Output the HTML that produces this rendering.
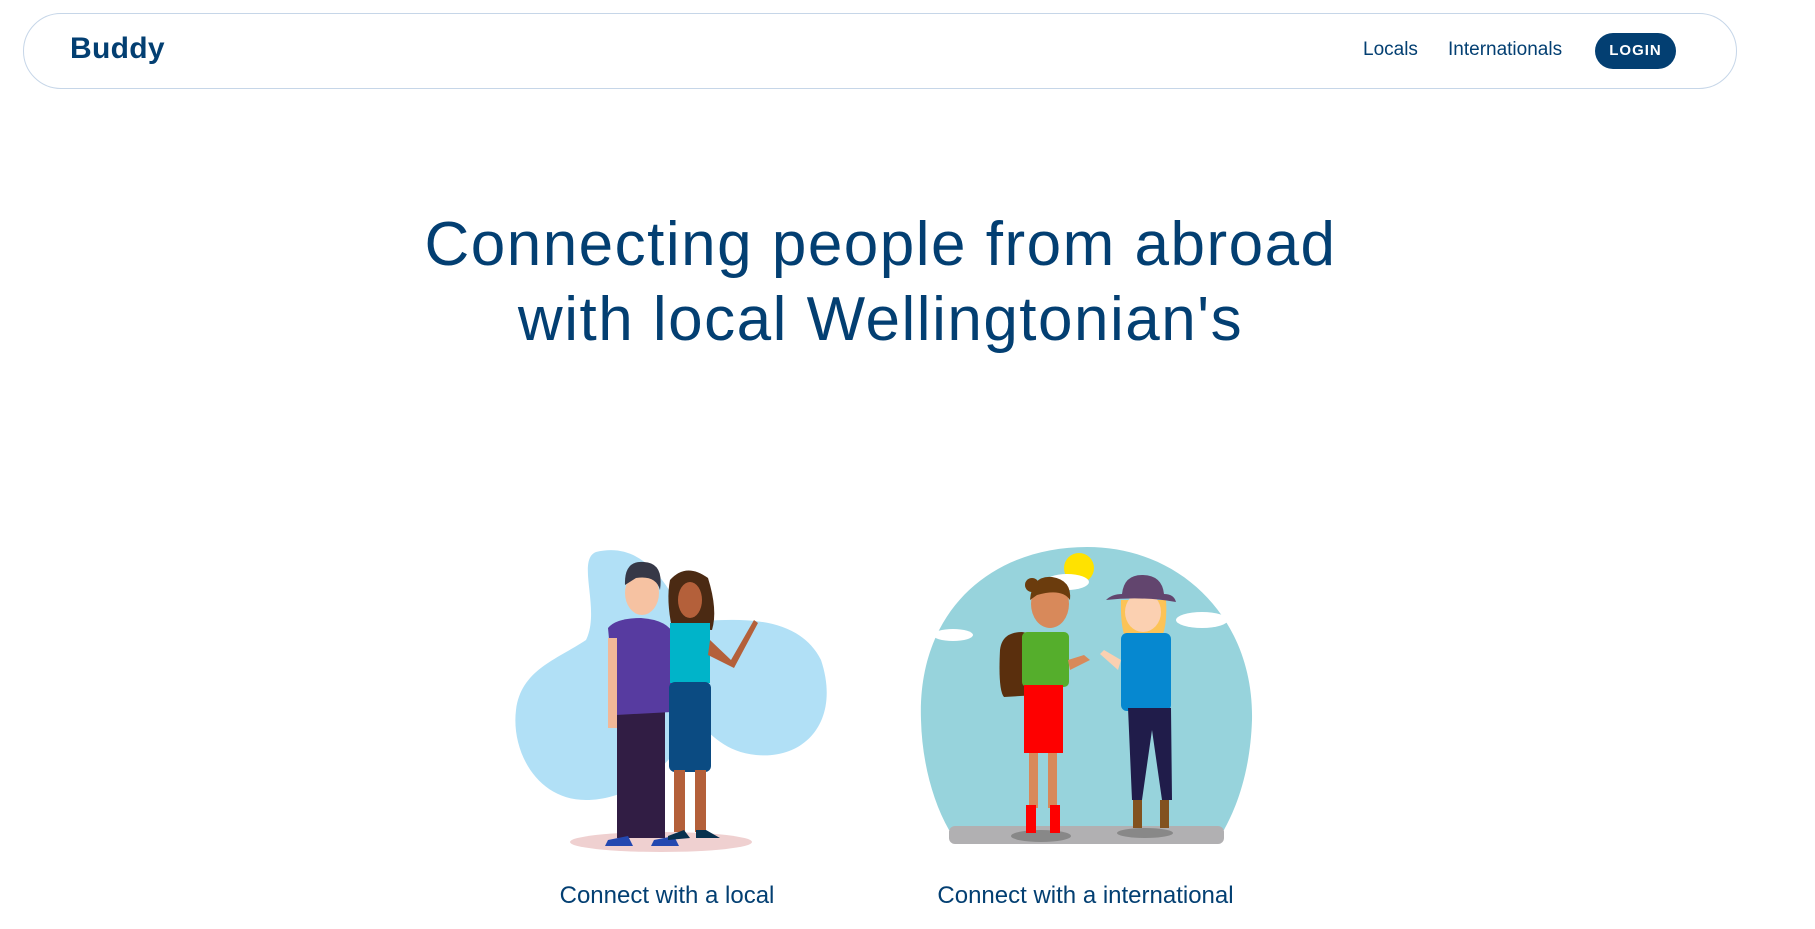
<!DOCTYPE html>
<html><head><meta charset="utf-8"><style>
*{margin:0;padding:0;box-sizing:border-box}
body{width:1815px;height:929px;background:#fff;font-family:"Liberation Sans",sans-serif;color:#033f72;position:relative;overflow:hidden}
.nav{position:absolute;left:23px;top:13px;width:1714px;height:76px;border:1px solid #c6d6e8;border-radius:38px}
.logo{position:absolute;left:70px;top:32px;font-size:30px;font-weight:bold;color:#033f72;letter-spacing:0.3px}
.l{position:absolute;top:39px;font-size:19px}
.btn{position:absolute;left:1595px;top:33px;width:81px;height:36px;border-radius:18px;background:#033f72;color:#fff;font-size:15px;font-weight:bold;letter-spacing:1px;text-align:center;line-height:36px}
h1{position:absolute;left:-27px;width:1815px;top:207px;text-align:center;font-weight:normal;font-size:62px;letter-spacing:1.5px;line-height:75px;color:#033f72}
.cap{position:absolute;top:882px;font-size:24px;text-align:center}
svg{position:absolute;left:0;top:0}
</style></head><body>
<div class="nav"></div>
<div class="logo">Buddy</div>
<div class="l" style="left:1363px">Locals</div>
<div class="l" style="left:1448px">Internationals</div>
<div class="btn">LOGIN</div>
<h1>Connecting people from abroad<br>with local Wellingtonian's</h1>
<svg width="1815" height="929">
<g transform="translate(-4,0)">
<path d="M600 552 C650 540 675 590 690 622 C730 620 800 610 825 660 C845 720 810 760 760 755 C730 752 715 735 700 720 C680 760 640 800 590 800 C540 800 515 750 520 710 C525 670 560 660 590 640 C605 610 580 560 600 552Z" fill="#b1e0f6"/>
<ellipse cx="665" cy="842" rx="91" ry="10" fill="#efd0d0"/>
<rect x="621" y="710" width="48" height="128" fill="#311d44"/>
<path d="M612 628 Q620 618 645 618 Q672 620 678 635 L676 712 L620 715 Z" fill="#573ba0"/>
<rect x="612" y="638" width="9" height="90" fill="#f2b898"/>
<ellipse cx="646" cy="593" rx="17" ry="22" fill="#f6c2a2"/>
<path d="M629 585 Q628 560 648 562 Q668 563 664 590 Q660 575 640 578 Z" fill="#363847"/>
<path d="M612 840 l20 -4 l5 10 l-28 0Z M658 840 l20 -4 l5 10 l-28 0Z" fill="#2348b0"/>
<path d="M674 580 Q690 562 712 578 Q722 610 716 630 L676 628 Q670 600 674 580Z" fill="#4b2a13"/>
<ellipse cx="694" cy="600" rx="12" ry="18" fill="#b4603a"/>
<rect x="674" y="623" width="40" height="60" fill="#00b4c9"/>
<path d="M714 640 L735 660 L758 620 L762 623 L738 668 L712 655Z" fill="#b4603a"/>
<rect x="673" y="682" width="42" height="90" rx="6" fill="#0b4b82"/>
<rect x="678" y="770" width="11" height="62" fill="#b4603a"/>
<rect x="699" y="770" width="11" height="62" fill="#b4603a"/>
<path d="M672 836 l16 -6 l6 8 l-22 2Z M700 830 l10 0 l14 8 l-24 0Z" fill="#08314e"/>
</g>
<g transform="translate(-8,0)">
<path d="M929 720 C925 610 1000 547 1095 547 C1190 547 1262 620 1260 720 C1258 780 1240 815 1232 830 L957 830 C940 800 930 760 929 720Z" fill="#97d3dc"/>
<rect x="957" y="826" width="275" height="18" rx="6" fill="#b1b0b2"/>
<circle cx="1087" cy="568" r="15" fill="#ffe200"/>
<ellipse cx="1075" cy="582" rx="22" ry="8" fill="#fff"/>
<ellipse cx="961" cy="635" rx="20" ry="6" fill="#fff"/>
<ellipse cx="1210" cy="620" rx="26" ry="8" fill="#fff"/>
<ellipse cx="1049" cy="836" rx="30" ry="6" fill="#888"/>
<ellipse cx="1153" cy="833" rx="28" ry="5" fill="#888"/>
<path d="M1008 650 Q1010 632 1030 632 L1047 635 L1045 695 L1012 697 Q1006 690 1008 650Z" fill="#5a2f0d"/>
<ellipse cx="1058" cy="604" rx="19" ry="24" fill="#d8895a"/>
<path d="M1038 600 Q1040 575 1060 577 Q1080 580 1078 600 Q1070 588 1045 595 Z" fill="#6b3c0d"/>
<circle cx="1040" cy="585" r="7" fill="#6b3c0d"/>
<rect x="1030" y="632" width="47" height="55" rx="5" fill="#55ae2c"/>
<rect x="1032" y="685" width="39" height="68" fill="#fe0000"/>
<rect x="1037" y="753" width="9" height="55" fill="#d8895a"/>
<rect x="1056" y="753" width="9" height="55" fill="#d8895a"/>
<rect x="1034" y="805" width="10" height="28" fill="#fe0000"/>
<rect x="1058" y="805" width="10" height="28" fill="#fe0000"/>
<path d="M1076 660 L1092 655 L1098 660 L1078 670Z" fill="#d8895a"/>
<path d="M1129 600 Q1128 640 1140 645 L1166 645 Q1176 630 1174 600Z" fill="#fcc356"/>
<ellipse cx="1151" cy="612" rx="18" ry="20" fill="#fbd0b1"/>
<path d="M1114 600 Q1120 594 1130 594 Q1132 575 1150 575 Q1170 575 1172 594 Q1182 594 1184 602 Q1150 596 1114 600Z" fill="#62456e"/>
<rect x="1129" y="633" width="50" height="78" rx="6" fill="#0688d0"/>
<path d="M1136 708 L1179 708 L1180 800 L1170 800 L1160 730 L1150 800 L1140 800Z" fill="#201c4a"/>
<rect x="1141" y="800" width="9" height="28" fill="#82521f"/>
<rect x="1168" y="800" width="9" height="28" fill="#82521f"/>
<path d="M1129 660 L1112 650 L1108 654 L1126 670Z" fill="#fbd0b1"/>
</g>
</svg>
<div class="cap" style="left:527px;width:280px">Connect with a local</div>
<div class="cap" style="left:923px;width:325px">Connect with a international</div>
</body></html>
